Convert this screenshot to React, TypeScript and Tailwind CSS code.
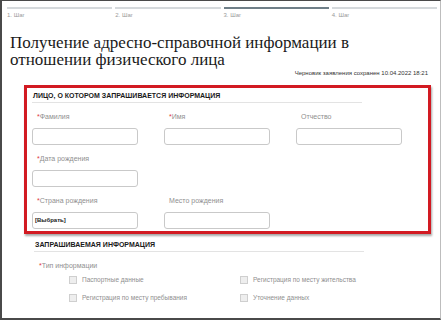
import React from 'react';

const steps = ['1. Шаг', '2. Шаг', '3. Шаг', '4. Шаг'];

function Label({ text, required }: { text: string; required?: boolean }) {
  return (
    <div className="h-[12px] pl-[5px] text-[7px] leading-[12px] text-[#8f8f8f]">
      {required && <span className="text-[#e0393e]">*</span>}
      {text}
    </div>
  );
}

function Field({ label, required, value }: { label: string; required?: boolean; value?: string }) {
  return (
    <div className="flex flex-col gap-[5px]">
      <Label text={label} required={required} />
      <div className="flex h-[17px] w-[106px] items-center rounded-[3px] border border-[#c9c9c9] bg-white px-[2px] text-[6px] font-bold text-[#222]">
        {value}
      </div>
    </div>
  );
}

function Check({ text }: { text: string }) {
  return (
    <div className="flex items-center gap-[5px]">
      <div className="h-[8px] w-[8px] border border-[#cfcfcf] bg-[#eeeeee]" />
      <span className="text-[6.5px] leading-[8px] text-[#8f8f8f]">{text}</span>
    </div>
  );
}

export default function App() {
  return (
    <div
      className="flex h-[320px] w-[441px] flex-col overflow-hidden border-b-2 border-l-2 border-t border-r border-b-[#4a4a4a] border-l-[#4a4a4a] border-t-[#4a4a4a] border-r-[#bdbdbd] bg-white"
      style={{ fontFamily: '"Liberation Sans", Arial, sans-serif' }}
    >
      {/* Steps */}
      <div className="grid grid-cols-4 gap-[3px] pl-[5px] pr-[3px] pt-[6px]">
        {steps.map((s, i) => (
          <div key={s} className="flex flex-col gap-[3px]">
            <div className={i === 2 ? 'h-[2px] bg-[#6f7f88]' : 'h-[2px] bg-[#d5d9dc]'} />
            <span className="text-[6px] leading-[6px] text-[#9a9a9a]">{s}</span>
          </div>
        ))}
      </div>

      {/* Title */}
      <h1
        className="mt-[16px] pl-[8px] text-[17px] leading-[17px] text-[#1a1a1a]"
        style={{ fontFamily: '"Liberation Serif", "Times New Roman", serif' }}
      >
        Получение адресно-справочной информации в
        <br />
        отношении физического лица
      </h1>
      <div className="mt-[1px] pr-[12px] text-right text-[6px] leading-[8px] text-[#333]">
        Черновик заявления сохранен 10.04.2022 18:21
      </div>

      {/* Red box */}
      <div className="ml-[22px] mt-[8px] w-[407px] border-[3px] border-[#d21a22] pb-[2px] pl-[5px] shadow-[1px_2px_2px_rgba(0,0,0,0.35)]">
        <div className="mt-[3px] w-[330px] border-b border-[#e3e3e3] pb-[2px] pl-[1px] text-[7px] font-bold leading-[9px] text-[#1a1a1a]">
          ЛИЦО, О КОТОРОМ ЗАПРАШИВАЕТСЯ ИНФОРМАЦИЯ
        </div>
        <div className="mt-[8px] grid grid-cols-[106px_106px_106px] gap-x-[26px] gap-y-[8px]">
          <Field label="Фамилия" required />
          <Field label="Имя" required />
          <Field label="Отчество" />
          <Field label="Дата рождения" required />
          <div />
          <div />
          <Field label="Страна рождения" required value="[Выбрать]" />
          <Field label="Место рождения" />
        </div>
      </div>

      {/* Requested info */}
      <div className="ml-[32px] mt-[6px] w-[330px] border-b border-[#e3e3e3] pb-[2px] pl-[1px] text-[7px] font-bold leading-[9px] text-[#1a1a1a]">
        ЗАПРАШИВАЕМАЯ ИНФОРМАЦИЯ
      </div>
      <div className="ml-[32px] mt-[8px]">
        <Label text="Тип информации" required />
      </div>
      <div className="ml-[67px] mt-[4px] grid grid-cols-[171px_171px] gap-y-[10px]">
        <Check text="Паспортные данные" />
        <Check text="Регистрация по месту жительства" />
        <Check text="Регистрация по месту пребывания" />
        <Check text="Уточнение данных" />
      </div>
    </div>
  );
}
